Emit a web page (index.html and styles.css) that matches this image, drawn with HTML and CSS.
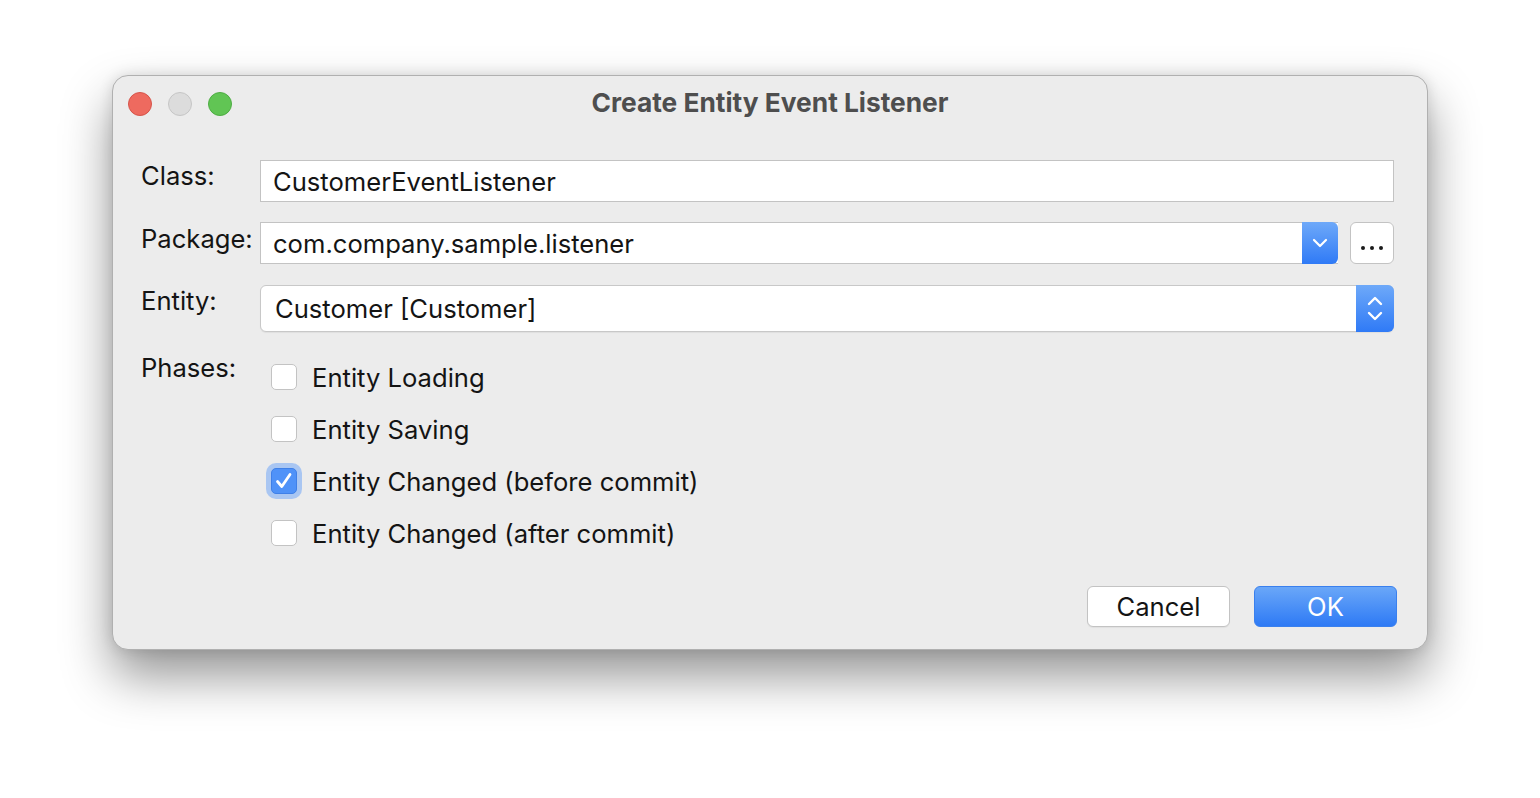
FILE: index.html
```html
<!DOCTYPE html>
<html>
<head>
<meta charset="utf-8">
<link rel="stylesheet" href="styles.css">
</head>
<body>
<div class="window">
  <div class="titlebar">
    <div class="lights">
      <span class="light red"></span>
      <span class="light gray"></span>
      <span class="light green"></span>
    </div>
    <div class="title">Create Entity Event Listener</div>
  </div>
  <div class="form">
    <div class="label lbl-class">Class:</div>
    <div class="field text">CustomerEventListener</div>

    <div class="label lbl-pkg">Package:</div>
    <div class="pkg-row">
      <div class="field combo">
        <span class="combo-text">com.company.sample.listener</span>
        <span class="drop-btn">
          <svg width="16" height="10" viewBox="0 0 16 10"><path d="M2 2 L8 8 L14 2" fill="none" stroke="#fff" stroke-width="2.2" stroke-linecap="round" stroke-linejoin="round"/></svg>
        </span>
      </div>
      <div class="dots-btn"><span class="dot"></span><span class="dot"></span><span class="dot"></span></div>
    </div>

    <div class="label lbl-entity">Entity:</div>
    <div class="field popup">
      <span class="popup-text">Customer [Customer]</span>
      <span class="stepper">
        <svg width="18" height="34" viewBox="0 0 18 34"><path d="M3 12 L9 6 L15 12" fill="none" stroke="#fff" stroke-width="2.4" stroke-linecap="round" stroke-linejoin="round"/><path d="M3 21 L9 27 L15 21" fill="none" stroke="#fff" stroke-width="2.4" stroke-linecap="round" stroke-linejoin="round"/></svg>
      </span>
    </div>

    <div class="label lbl-phases">Phases:</div>
    <div class="checks">
      <div class="check-row"><span class="box"></span><span>Entity Loading</span></div>
      <div class="check-row"><span class="box"></span><span>Entity Saving</span></div>
      <div class="check-row"><span class="box checked"><svg width="22" height="22" viewBox="0 0 22 22"><path d="M4.5 11.5 L8.8 16.5 L17 4.5" fill="none" stroke="#fff" stroke-width="2.8" stroke-linecap="round" stroke-linejoin="round"/></svg></span><span>Entity Changed (before commit)</span></div>
      <div class="check-row"><span class="box"></span><span>Entity Changed (after commit)</span></div>
    </div>
  </div>
  <div class="buttons">
    <div class="btn cancel">Cancel</div>
    <div class="btn ok">OK</div>
  </div>
</div>
</body>
</html>
```

FILE: styles.css
```css
html, body {
  margin: 0;
  padding: 0;
  background: #ffffff;
}
body {
  width: 1540px;
  height: 798px;
  overflow: hidden;
  font-family: Inter, "Liberation Sans", sans-serif;
  color: #141414;
}
.window {
  margin: 75px 0 0 112px;
  width: 1316px;
  height: 575px;
  box-sizing: border-box;
  background: #ececec;
  border: 1px solid #b0b0b0;
  border-radius: 16px;
  box-shadow: 0 26px 50px rgba(0,0,0,0.42), 0 0 14px rgba(0,0,0,0.12);
  display: flex;
  flex-direction: column;
}
.titlebar {
  height: 55px;
  display: flex;
  align-items: center;
  position: relative;
}
.lights {
  display: flex;
  gap: 16px;
  padding-left: 15px;
}
.light {
  width: 24px;
  height: 24px;
  border-radius: 50%;
  box-sizing: border-box;
}
.red { background: #ee6a5f; border: 1px solid #d6544a; }
.gray { background: #dcdcdc; border: 1px solid #c6c6c6; }
.green { background: #61c554; border: 1px solid #4ead43; }
.title {
  position: absolute;
  left: 0;
  right: 0;
  top: 11px;
  text-align: center;
  font-weight: 700;
  font-size: 26.3px;
  color: #4e4e4e;
}
.form {
  display: grid;
  grid-template-columns: 119px 1134px;
  row-gap: 20px;
  padding: 29px 0 0 28px;
  font-size: 25.6px;
}
.label {
  line-height: 30px;
  color: #141414;
}
.lbl-class { padding-top: 1px; }
.lbl-pkg { padding-top: 2px; }
.lbl-entity { padding-top: 2px; }
.lbl-phases { padding-top: 1px; }
.field {
  box-sizing: border-box;
  background: #fff;
  border: 1px solid #c3c3c3;
  height: 42px;
  display: flex;
  align-items: center;
}
.text {
  padding-left: 12px;
}
.pkg-row {
  display: flex;
  gap: 12px;
}
.combo {
  width: 1079px;
  padding-left: 12px;
  justify-content: space-between;
  border-right: none;
}
.drop-btn {
  width: 36px;
  height: 42px;
  margin-top: -1px;
  margin-bottom: -1px;
  box-sizing: border-box;
  border-radius: 0 6px 6px 0;
  background: linear-gradient(#6ea9f9, #2f7af6);
  display: flex;
  align-items: center;
  justify-content: center;
}
.dots-btn {
  width: 44px;
  height: 42px;
  box-sizing: border-box;
  background: #fff;
  border: 1px solid #c3c3c3;
  border-radius: 6px;
  display: flex;
  align-items: flex-end;
  justify-content: center;
  gap: 5px;
  padding-bottom: 13px;
}
.dot {
  width: 4px;
  height: 4px;
  border-radius: 50%;
  background: #1a1a1a;
}
.popup {
  height: 47px;
  margin-top: 1px;
  border-radius: 6px;
  padding-left: 14px;
  justify-content: space-between;
  border-color: #c8c8c8;
  box-shadow: 0 1px 1px rgba(0,0,0,0.06);
}
.stepper {
  width: 38px;
  height: 47px;
  margin: -1px -1px -1px 0;
  border-radius: 0 6px 6px 0;
  background: linear-gradient(#6ea9f9, #2f7af6);
  display: flex;
  align-items: center;
  justify-content: center;
}
.checks {
  display: flex;
  flex-direction: column;
  margin-top: -1px;
}
.check-row {
  height: 52px;
  display: flex;
  align-items: center;
  gap: 15px;
  padding-left: 11px;
}
.box {
  width: 26px;
  height: 26px;
  box-sizing: border-box;
  background: #fff;
  border: 1px solid #c3c3c3;
  border-radius: 5px;
  display: flex;
  align-items: center;
  justify-content: center;
  flex: none;
}
.box.checked {
  background: #4f92f8;
  border: 1px solid #3f80e8;
  box-shadow: 0 0 0 5px #a9c6f2;
}
.buttons {
  display: flex;
  justify-content: flex-end;
  gap: 24px;
  padding: 27px 30px 0 0;
}
.btn {
  width: 143px;
  height: 41px;
  box-sizing: border-box;
  border-radius: 6px;
  display: flex;
  align-items: center;
  justify-content: center;
  font-size: 25.6px;
}
.cancel {
  background: #fff;
  border: 1px solid #c3c3c3;
  color: #141414;
  box-shadow: 0 1px 1px rgba(0,0,0,0.05);
}
.ok {
  background: linear-gradient(#6aa7f8, #2e7af5);
  color: #fff;
  border: 1px solid #3a80ee;
}
```
